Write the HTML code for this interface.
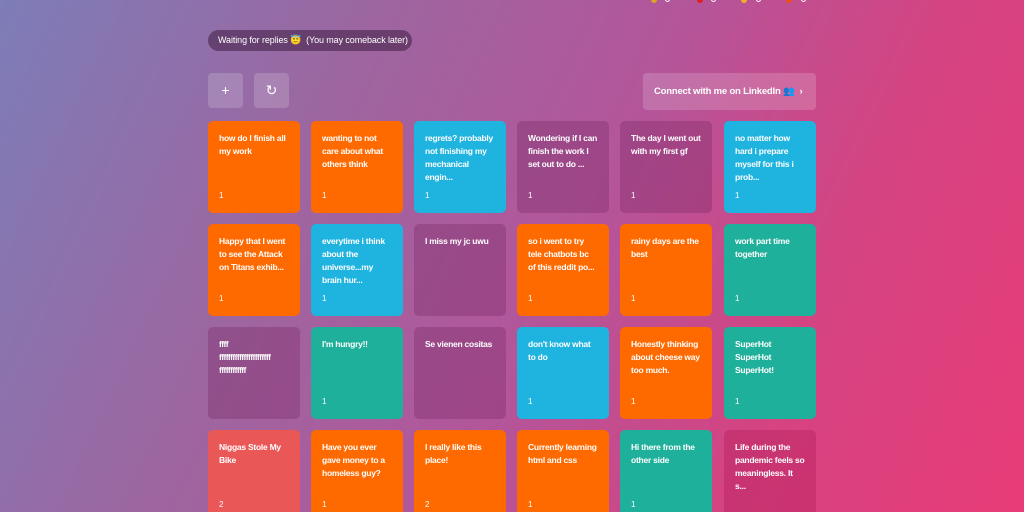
<!DOCTYPE html>
<html><head><meta charset="utf-8"><style>
*{margin:0;padding:0;box-sizing:border-box}
html,body{width:1024px;height:512px;overflow:hidden}
body{font-family:"Liberation Sans",sans-serif;background:linear-gradient(115deg,#7d7db8 0%,#9d66a0 30%,#b4559a 55%,#d44482 75%,#e83c78 100%);position:relative;color:#fff}
.pill{position:absolute;left:208px;top:30px;height:21px;width:204px;border-radius:11px;background:rgba(70,35,75,.6);font-size:9px;line-height:21px;padding-left:10px;white-space:nowrap;letter-spacing:-.1px}
.btn{position:absolute;top:73px;width:35px;height:35px;border-radius:4px;background:rgba(255,255,255,.17);text-align:center;line-height:35px;font-size:14px}
.li{position:absolute;left:643px;top:73px;width:173px;height:37px;border-radius:4px;background:rgba(255,255,255,.17);font-size:9.5px;font-weight:bold;line-height:37px;padding-left:11px;letter-spacing:-.2px}
.c{position:absolute;width:92px;height:92px;border-radius:5px;padding:11px 0 11px 11px;font-size:8.5px;font-weight:bold;line-height:13px;letter-spacing:-.25px;white-space:nowrap;overflow:hidden}
.c span{position:absolute;left:11px;bottom:11px;font-weight:normal;font-size:8px}
.o{background:#ff6a00}.b{background:#1fb3df}.p{background:rgba(120,40,100,.35)}.t{background:#1fb09b}.r{background:#ea5757}.m{background:rgba(180,30,90,.4)}
.d{position:absolute;top:-3px;width:6px;height:6px;border-radius:50%}
</style></head><body>
<div class="d" style="left:651px;background:#e0a020"></div><div class="d" style="left:665px;border:1px solid #fff;width:5px;height:5px"></div>
<div class="d" style="left:697px;background:#e02020"></div><div class="d" style="left:711px;border:1px solid #fff;width:5px;height:5px"></div>
<div class="d" style="left:741px;background:#f0b020"></div><div class="d" style="left:756px;border:1px solid #fff;width:5px;height:5px"></div>
<div class="d" style="left:786px;background:#f05010"></div><div class="d" style="left:801px;border:1px solid #fff;width:5px;height:5px"></div>
<div class="pill">Waiting for replies 😇 &nbsp;(You may comeback later)</div>
<div class="btn" style="left:208px">+</div>
<div class="btn" style="left:254px">↻</div>
<div class="li">Connect with me on LinkedIn 👥 &nbsp;›</div>

<div class="c o" style="left:208px;top:121px">how do I finish all<br>my work<span>1</span></div>
<div class="c o" style="left:311px;top:121px">wanting to not<br>care about what<br>others think<span>1</span></div>
<div class="c b" style="left:414px;top:121px">regrets? probably<br>not finishing my<br>mechanical<br>engin...<span>1</span></div>
<div class="c p" style="left:517px;top:121px">Wondering if I can<br>finish the work I<br>set out to do ...<span>1</span></div>
<div class="c p" style="left:620px;top:121px">The day I went out<br>with my first gf<span>1</span></div>
<div class="c b" style="left:724px;top:121px">no matter how<br>hard i prepare<br>myself for this i<br>prob...<span>1</span></div>

<div class="c o" style="left:208px;top:224px">Happy that I went<br>to see the Attack<br>on Titans exhib...<span>1</span></div>
<div class="c b" style="left:311px;top:224px">everytime i think<br>about the<br>universe...my<br>brain hur...<span>1</span></div>
<div class="c p" style="left:414px;top:224px">I miss my jc uwu</div>
<div class="c o" style="left:517px;top:224px">so i went to try<br>tele chatbots bc<br>of this reddit po...<span>1</span></div>
<div class="c o" style="left:620px;top:224px">rainy days are the<br>best<span>1</span></div>
<div class="c t" style="left:724px;top:224px">work part time<br>together<span>1</span></div>

<div class="c p" style="left:208px;top:327px;letter-spacing:-.6px">ffff<br>fffffffffffffffffffffff<br>ffffffffffff</div>
<div class="c t" style="left:311px;top:327px">I'm hungry!!<span>1</span></div>
<div class="c p" style="left:414px;top:327px">Se vienen cositas</div>
<div class="c b" style="left:517px;top:327px">don't know what<br>to do<span>1</span></div>
<div class="c o" style="left:620px;top:327px">Honestly thinking<br>about cheese way<br>too much.<span>1</span></div>
<div class="c t" style="left:724px;top:327px">SuperHot<br>SuperHot<br>SuperHot!<span>1</span></div>

<div class="c r" style="left:208px;top:430px">Niggas Stole My<br>Bike<span>2</span></div>
<div class="c o" style="left:311px;top:430px">Have you ever<br>gave money to a<br>homeless guy?<span>1</span></div>
<div class="c o" style="left:414px;top:430px">I really like this<br>place!<span>2</span></div>
<div class="c o" style="left:517px;top:430px">Currently learning<br>html and css<span>1</span></div>
<div class="c t" style="left:620px;top:430px">Hi there from the<br>other side<span>1</span></div>
<div class="c m" style="left:724px;top:430px">Life during the<br>pandemic feels so<br>meaningless. It<br>s...</div>
</body></html>
